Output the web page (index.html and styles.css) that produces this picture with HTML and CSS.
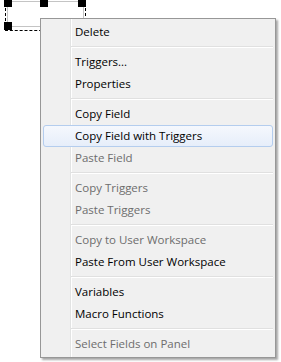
FILE: index.html
```html
<!DOCTYPE html>
<html lang="en">
<head>
    <meta charset="UTF-8">
    <meta name="viewport" content="width=device-width, initial-scale=1.0">
    <title>Field Context Menu</title>
    <link rel="stylesheet" href="styles.css">
</head>
<body>
    <div class="canvas">
        <!-- selected field on the panel -->
        <div class="field"></div>
        <div class="selection"></div>
        <span class="handle handle-tl"></span>
        <span class="handle handle-tm"></span>
        <span class="handle handle-tr"></span>
        <span class="handle handle-bl"></span>

        <ul class="menu">
            <li class="item">Delete</li>
            <li class="sep"></li>
            <li class="item">Triggers...</li>
            <li class="item">Properties</li>
            <li class="sep"></li>
            <li class="item">Copy Field</li>
            <li class="item hover">Copy Field with Triggers</li>
            <li class="item disabled">Paste Field</li>
            <li class="sep"></li>
            <li class="item disabled">Copy Triggers</li>
            <li class="item disabled">Paste Triggers</li>
            <li class="sep"></li>
            <li class="item disabled">Copy to User Workspace</li>
            <li class="item">Paste From User Workspace</li>
            <li class="sep"></li>
            <li class="item">Variables</li>
            <li class="item">Macro Functions</li>
            <li class="sep"></li>
            <li class="item disabled">Select Fields on Panel</li>
        </ul>
    </div>
</body>
</html>
```

FILE: styles.css
```css
* {
    box-sizing: border-box;
}

body {
    margin: 0;
    background: #fff;
    font-family: "Open Sans", Arial, sans-serif;
    font-size: 11.5px;
}

.canvas {
    position: relative;
    width: 281px;
    height: 362px;
    overflow: hidden;
}

.field {
    position: absolute;
    left: 7px;
    top: 1px;
    width: 77px;
    height: 26px;
    border: 1px solid #c4c4c4;
    background: #fff;
}

.selection {
    position: absolute;
    left: 5px;
    top: -2px;
    width: 81px;
    height: 33px;
    border: 1px dashed #000;
}

.handle {
    position: absolute;
    width: 8px;
    height: 8px;
    background: #000;
}

.handle-tl { left: 4px; top: -1px; }
.handle-tm { left: 40px; top: -1px; }
.handle-tr { left: 78px; top: -1px; }
.handle-bl { left: 4px; top: 22px; }

.menu {
    position: absolute;
    left: 40px;
    top: 18px;
    width: 236px;
    margin: 0;
    padding: 2px;
    list-style: none;
    border: 1px solid #979797;
    background:
        linear-gradient(to right, transparent 29px, #e2e3e3 29px, #e2e3e3 30px, #fff 30px, #fff 31px, transparent 31px),
        #f0f0f0;
    box-shadow: 2px 2px 2px rgba(0, 0, 0, 0.35);
}

.item {
    height: 22px;
    line-height: 20px;
    padding-left: 31px;
    border: 1px solid transparent;
    border-radius: 3px;
    color: #000;
    white-space: nowrap;
}

.item.disabled {
    color: #6d6d6d;
}

.item.hover {
    border-color: #b4cdee;
    background: linear-gradient(#f5f8fd, #e6eefa);
}

.sep {
    height: 8px;
    margin-left: 28px;
    background: linear-gradient(transparent 3px, #e0e0e0 3px, #e0e0e0 4px, #fff 4px, #fff 5px, transparent 5px);
}
```
